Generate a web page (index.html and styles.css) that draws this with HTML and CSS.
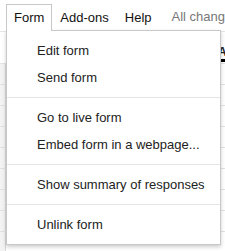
FILE: index.html
```html
<!DOCTYPE html>
<html lang="en">
<head>
    <meta charset="UTF-8">
    <title>Form menu</title>
    <link rel="stylesheet" href="styles.css">
</head>
<body>
    <div class="menubar">
        <div class="menubar-item active">Form</div>
        <div class="menubar-item">Add-ons</div>
        <div class="menubar-item">Help</div>
        <div class="save-status">All changes saved in Drive</div>
    </div>

    <div class="toolbar">
        <span class="text-color">A</span>
    </div>

    <div class="grid"></div>

    <div class="menu">
        <div class="menu-item">Edit form</div>
        <div class="menu-item">Send form</div>
        <div class="separator"></div>
        <div class="menu-item">Go to live form</div>
        <div class="menu-item">Embed form in a webpage...</div>
        <div class="separator"></div>
        <div class="menu-item">Show summary of responses</div>
        <div class="separator"></div>
        <div class="menu-item">Unlink form</div>
    </div>
</body>
</html>
```

FILE: styles.css
```css
* {
    margin: 0;
    padding: 0;
    box-sizing: border-box;
    font-family: "Liberation Sans", Arial, sans-serif;
}

body {
    background: white;
    width: 225px;
    height: 251px;
    overflow: hidden;
    position: relative;
}

.menubar {
    display: flex;
    align-items: flex-end;
    height: 32px;
    padding-left: 6px;
    border-bottom: 1px solid #e5e5e5;
    white-space: nowrap;
    overflow: hidden;
    font-size: 13px;
}

.menubar-item {
    height: 27px;
    line-height: 25px;
    padding: 0 7px;
    border: 1px solid transparent;
    border-bottom: none;
    color: #111;
}

.menubar-item.active {
    position: relative;
    z-index: 2;
    height: 28px;
    margin-bottom: -1px;
    background: white;
    border-color: #c8c8c8;
}

.save-status {
    margin-left: 12px;
    line-height: 25px;
    height: 27px;
    color: #777;
}

.toolbar {
    height: 32px;
    border-bottom: 1px solid #e2e2e2;
    padding-left: 218px;
    padding-top: 10px;
}

.text-color {
    display: inline-block;
    font-size: 12px;
    font-weight: bold;
    line-height: 14px;
    color: #222;
    border-bottom: 3px solid #000;
}

.grid {
    height: 190px;
    background-image:
        repeating-linear-gradient(to bottom, transparent 0, transparent 20px, #e2e2e2 20px, #e2e2e2 21px),
        linear-gradient(to right, #f3f3f3 0, #f3f3f3 5px, #d8d8d8 5px, #d8d8d8 6px, transparent 6px);
}

.menu {
    position: absolute;
    top: 30px;
    left: 6px;
    width: 215px;
    padding: 6px 0;
    background: white;
    border: 1px solid #c8c8c8;
    box-shadow: 0 2px 4px rgba(0, 0, 0, 0.2);
    z-index: 1;
}

.menu-item {
    height: 27px;
    line-height: 27px;
    padding-left: 30px;
    font-size: 13px;
    color: #222;
    white-space: nowrap;
}

.separator {
    height: 1px;
    margin: 6px 0;
    background: #e5e5e5;
}
```
